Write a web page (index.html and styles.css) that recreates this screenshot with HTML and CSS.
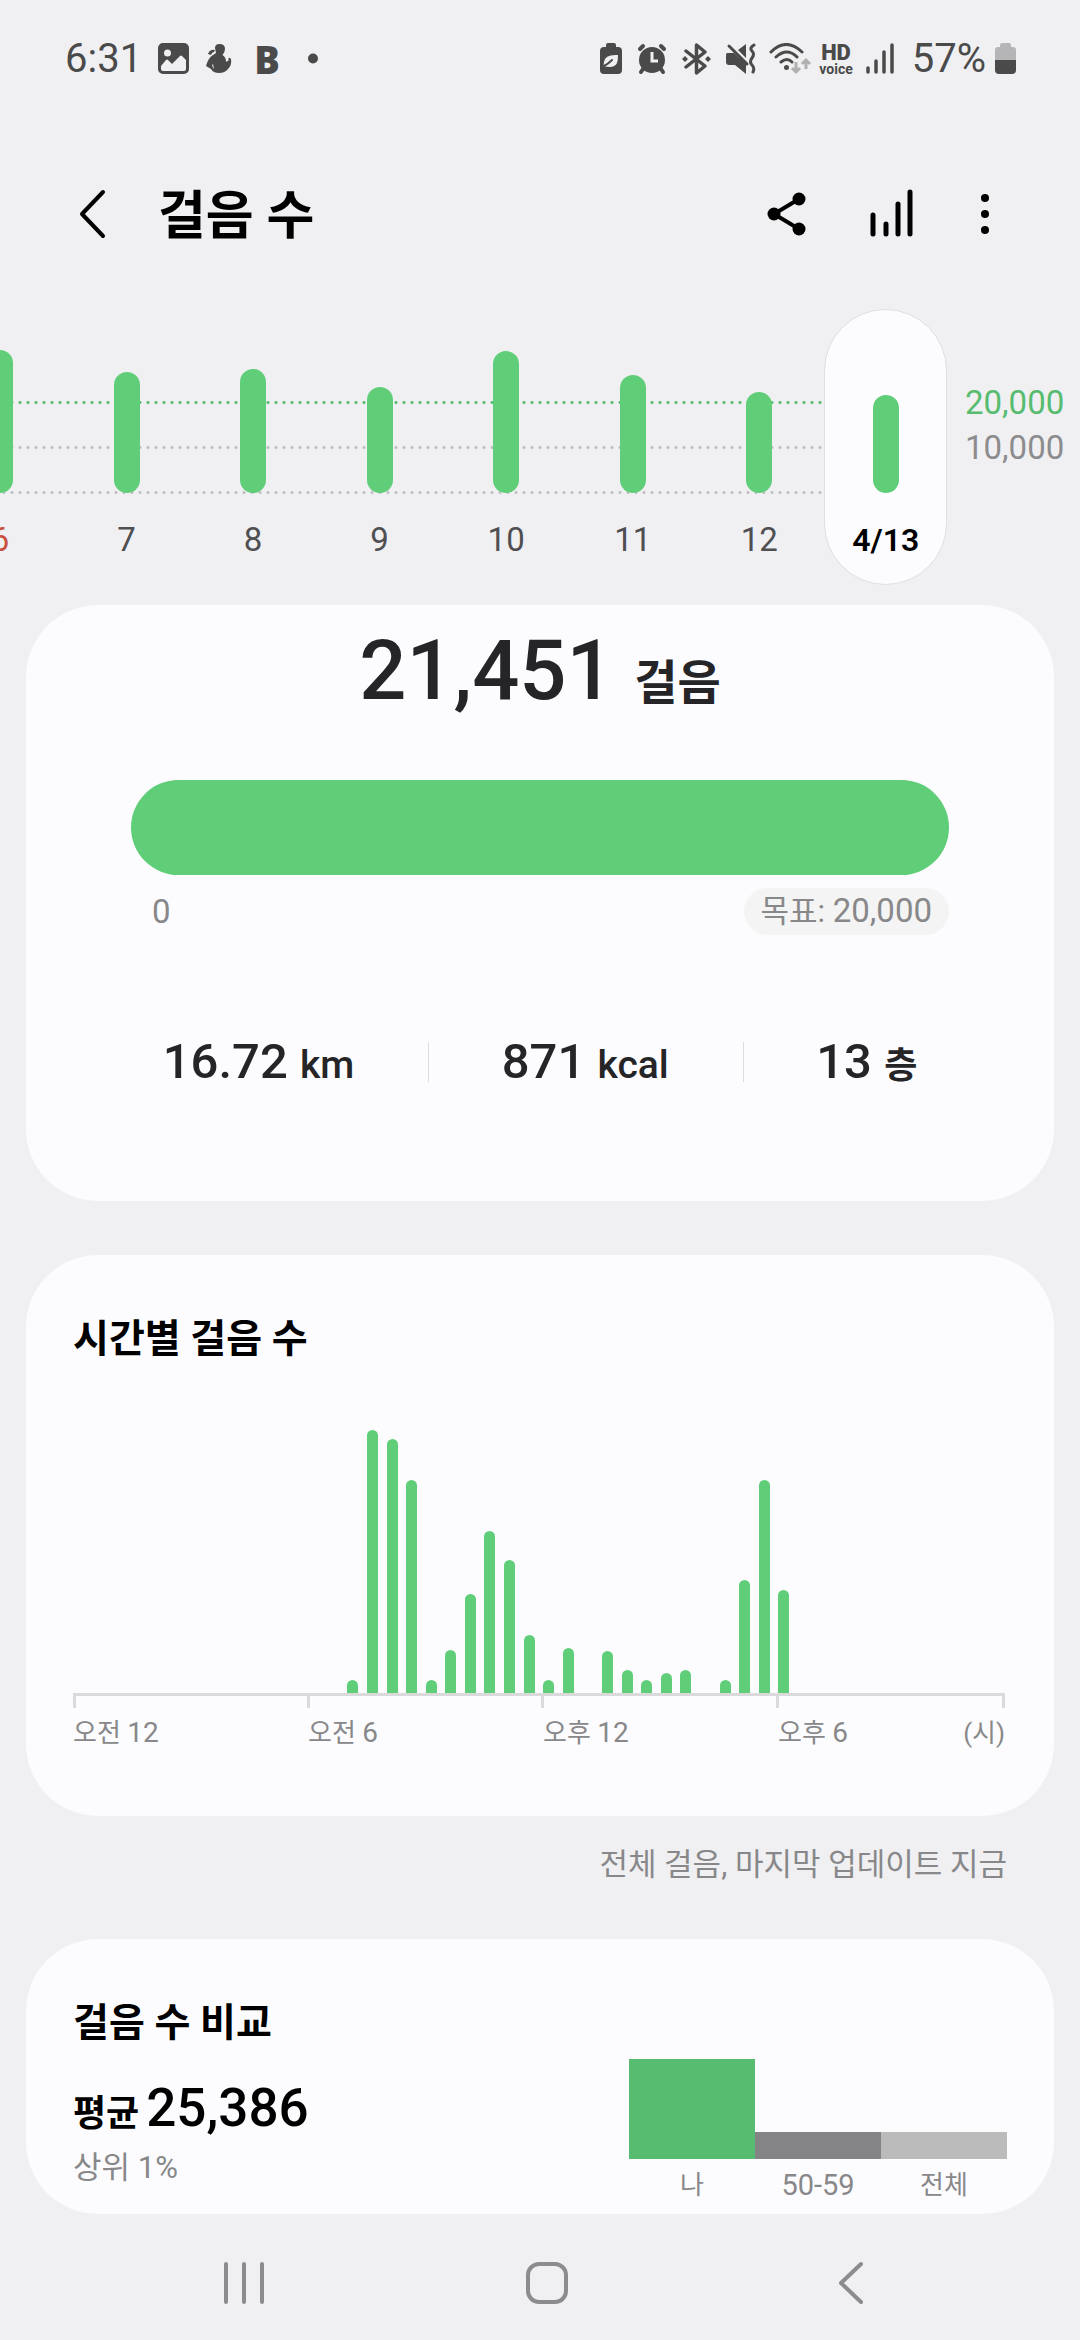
FILE: index.html
```html
<!DOCTYPE html>
<html lang="ko">
<head>
<meta charset="utf-8">
<meta name="viewport" content="width=device-width, initial-scale=1">
<title>걸음 수</title>
<link rel="stylesheet" href="styles.css">
</head>
<body>
<div class="status">
  <div class="status-left">
    <span class="status-text">6:31</span>
    <svg class="ic-image" width="32" height="32" viewBox="0 0 32 32"><path fill="#4a4a4a" fill-rule="evenodd" d="M5 0h21a5 5 0 0 1 5 5v21a5 5 0 0 1-5 5H5a5 5 0 0 1-5-5V5a5 5 0 0 1 5-5ZM9.500 6.500a3.500 3.500 0 1 0 0 7 3.500 3.500 0 0 0 0-7ZM3 23v3q0 2 2 2h21q2 0 2-2V17l-4-4q-1-1-2 0l-8 8-4-4q-1-.800-2 0Z"/></svg>
    <svg class="ic-figure" width="26" height="32" viewBox="0 0 26 32"><g fill="#4a4a4a"><path d="M9 5Q9 1 13.500 1Q19 1 19 6Q19 9 16.500 12Q20 14 20 18.500Q23 19 22.500 15.500Q23 14 25 16Q26 22 22 26Q19 30 13 30Q7 30 5 26L0 23Q2 15 7 12L10 10ZM7 21Q5 22 8 26Z" fill-rule="evenodd"/><path d="M2 11Q4 6 9 7L8 9Q6 9 5 12Z"/></g></svg>
    <span class="status-b">B</span>
    <svg class="ic-dot" width="10" height="32" viewBox="0 0 10 32"><circle cx="5" cy="15.500" r="5" fill="#4a4a4a"/></svg>
  </div>
  <div class="status-right">
    <svg width="22" height="32" viewBox="0 0 22 32"><path fill="#4a4a4a" fill-rule="evenodd" d="M8 0h6q2 0 2 2v2h2q4 0 4 4v19q0 4-4 4H4q-4 0-4-4V8q0-4 4-4h2V2q0-2 2-2ZM18 12Q5 11 4 19L3.500 23Q14 26 17 20Q18 17 18 12Z"/><path d="M4 23Q8 21 12 17" stroke="#4a4a4a" stroke-width="2" fill="none" stroke-linecap="round"/></svg>
    <svg width="30" height="32" viewBox="0 0 30 32"><g stroke="#4a4a4a" stroke-width="4" stroke-linecap="round" fill="none"><path d="M3 6l3-3M27 6l-3-3M6 26l-2 3M24 26l2 3"/></g><circle cx="15" cy="17" r="13" fill="#4a4a4a"/><path d="M15 9v9h6" fill="none" stroke="#f0f0f2" stroke-width="3"/></svg>
    <svg width="29" height="32" viewBox="0 0 29 32"><path d="M4 8L23 23L14.500 30V2L23 9L4 24" fill="none" stroke="#4a4a4a" stroke-width="3.500" stroke-linejoin="round" stroke-linecap="round"/><path d="M0 16l3-3 3 3-3 3ZM23 16l3-3 3 3-3 3Z" fill="#4a4a4a"/></svg>
    <svg width="31" height="32" viewBox="0 0 31 32"><path fill="#4a4a4a" d="M1 10h7l12 11v10L9 22H3q-3 0-3-3v-6q0-3 1-3ZM12 7l8-6v14Z"/><path d="M3 3l18 18" stroke="#4a4a4a" stroke-width="3" stroke-linecap="round"/><path d="M28 2q-5 3-2 6t0 7 0 7 1 7" fill="none" stroke="#4a4a4a" stroke-width="3" stroke-linecap="round"/></svg>
    <svg class="ic-wifi" width="42" height="32" viewBox="0 0 42 32"><g fill="none" stroke="#4a4a4a" stroke-width="3" stroke-linecap="round"><path d="M2 9Q17-6 33 9M7 14Q18 4 28 14M12 19Q18 14 23 19"/></g><circle cx="17.500" cy="24.500" r="2.500" fill="#4a4a4a"/><path d="M27 19v10m-4-4l4 4 4-4M37 26V17m-4 4l4-4 4 4" fill="none" stroke="#b0b0b0" stroke-width="3"/></svg>
    <span class="hd"><b>HD</b><span>voice</span></span>
    <svg class="ic-signal" width="28" height="32" viewBox="0 0 28 32"><path d="M2 25v4M10 18v11M18 9v20M26 2v27" stroke="#4a4a4a" stroke-width="3.500" stroke-linecap="round"/></svg>
    <span class="status-text">57%</span>
    <svg class="ic-batt" width="21" height="32" viewBox="0 0 21 32"><path fill="#b5b5b7" d="M7 0h7q2 0 2 2v2h2q3 0 3 3v10H0V7q0-3 3-3h2V2q0-2 2-2Z"/><path fill="#4a4a4a" d="M0 17h21v10q0 4-4 4H4q-4 0-4-4Z"/></svg>
  </div>
</div>

<header class="bar">
  <button class="icon-btn back" aria-label="뒤로"><svg width="28" height="52" viewBox="0 0 28 52"><path d="M25 4L4 26l21 22" fill="none" stroke="#000" stroke-width="4" stroke-linecap="round" stroke-linejoin="round"/></svg></button>
  <h1>걸음 수</h1>
  <button class="icon-btn" aria-label="공유"><svg width="40" height="50" viewBox="0 0 40 50"><path d="M32 10L7 25l25 15" fill="none" stroke="#000" stroke-width="4"/><g fill="#000"><circle cx="32" cy="10" r="6.500"/><circle cx="7" cy="25" r="6.500"/><circle cx="32" cy="40" r="6.500"/></g></svg></button>
  <button class="icon-btn chart" aria-label="통계"><svg width="44" height="50" viewBox="0 0 44 50"><path d="M3 26v19M16 35v10M28 15v30M40 3v42" stroke="#000" stroke-width="5" stroke-linecap="round"/></svg></button>
  <button class="icon-btn more" aria-label="더보기"><svg width="10" height="50" viewBox="0 0 10 50"><g fill="#000"><circle cx="5" cy="9" r="4"/><circle cx="5" cy="25" r="4"/><circle cx="5" cy="41" r="4"/></g></svg></button>
</header>

<main>
  <section class="week" aria-label="일별 걸음 수">
    <div class="days">
      <button class="day sunday"><span class="day-bar" style="height:143px"></span><span class="day-name">6</span></button>
      <button class="day"><span class="day-bar" style="height:121px"></span><span class="day-name">7</span></button>
      <button class="day"><span class="day-bar" style="height:124px"></span><span class="day-name">8</span></button>
      <button class="day"><span class="day-bar" style="height:106px"></span><span class="day-name">9</span></button>
      <button class="day"><span class="day-bar" style="height:142px"></span><span class="day-name">10</span></button>
      <button class="day"><span class="day-bar" style="height:118px"></span><span class="day-name">11</span></button>
      <button class="day"><span class="day-bar" style="height:101px"></span><span class="day-name">12</span></button>
      <button class="day selected" aria-current="date"><span class="day-bar" style="height:98px"></span><span class="day-name">4/13</span></button>
    </div>
    <div class="scale"><span class="goal">20,000</span><span>10,000</span></div>
  </section>

  <section class="card today">
    <p class="total">21,451 <span>걸음</span></p>
    <div class="progress" role="progressbar" aria-label="걸음 수" aria-valuemin="0" aria-valuemax="20000" aria-valuenow="20000"></div>
    <div class="range"><span>0</span><span class="target">목표: <span class="num">20,000</span></span></div>
    <ul class="stats">
      <li>16.72 <small>km</small></li>
      <li>871 <small>kcal</small></li>
      <li>13 <small class="ko">층</small></li>
    </ul>
  </section>

  <section class="card hourly">
    <h2>시간별 걸음 수</h2>
    <div class="bars">
      <i></i><i></i><i></i><i></i><i></i><i></i><i></i><i></i><i></i><i></i><i></i><i></i><i></i><i></i>
      <i style="height:13px"></i><i style="height:263px"></i><i style="height:254px"></i><i style="height:213px"></i>
      <i style="height:13px"></i><i style="height:43px"></i><i style="height:99px"></i><i style="height:162px"></i>
      <i style="height:133px"></i><i style="height:58px"></i><i style="height:13px"></i><i style="height:45px"></i>
      <i></i><i style="height:42px"></i><i style="height:23px"></i><i style="height:13px"></i>
      <i style="height:20px"></i><i style="height:23px"></i><i></i><i style="height:13px"></i>
      <i style="height:113px"></i><i style="height:213px"></i><i style="height:103px"></i>
      <i></i><i></i><i></i><i></i><i></i><i></i><i></i><i></i><i></i><i></i><i></i>
    </div>
    <div class="ticks"><span></span><span></span><span></span><span></span></div>
    <div class="hours"><span>오전 <b>12</b></span><span>오전 <b>6</b></span><span>오후 <b>12</b></span><span>오후 <b>6</b></span><span class="unit">(시)</span></div>
  </section>
  <p class="note">전체 걸음, 마지막 업데이트 지금</p>

  <section class="card compare">
    <div class="summary">
      <h2>걸음 수 비교</h2>
      <p class="average"><span>평균</span>25,386</p>
      <p class="rank">상위 1%</p>
    </div>
    <div class="groups">
      <div class="group me"><i style="height:100px"></i><span>나</span></div>
      <div class="group peers"><i style="height:27px"></i><span class="num">50-59</span></div>
      <div class="group all"><i style="height:27px"></i><span>전체</span></div>
    </div>
  </section>
</main>

<nav class="system-nav" aria-label="시스템">
  <button class="icon-btn" aria-label="최근 앱"><svg width="48" height="48" viewBox="0 0 48 48"><path d="M6 5v38M24 5v38M42 5v38" stroke="#8c8c8e" stroke-width="4" stroke-linecap="round"/></svg></button>
  <button class="icon-btn" aria-label="홈"><svg width="48" height="48" viewBox="0 0 48 48"><rect x="5" y="5" width="38" height="38" rx="11" fill="none" stroke="#8c8c8e" stroke-width="4"/></svg></button>
  <button class="icon-btn" aria-label="이전"><svg width="48" height="48" viewBox="0 0 48 48"><path d="M35 5L15 24l20 19" fill="none" stroke="#8c8c8e" stroke-width="4" stroke-linecap="round" stroke-linejoin="round"/></svg></button>
</nav>
</body>
</html>
```
FILE: styles.css
```css
* { box-sizing: border-box; }

body {
  margin: 0;
  min-height: 100vh;
  display: flex;
  flex-direction: column;
  background: #f0f0f2;
  color: #252528;
  font-family: Roboto, "Noto Sans CJK KR", sans-serif;
  font-size: 31px;
  line-height: 40px;
}

h1, h2, p, ul { margin: 0; padding: 0; }
ul { list-style: none; }
svg { display: block; }
main { flex: 1; }

button {
  padding: 0;
  border: 0;
  background: none;
  color: inherit;
  font: inherit;
}

/* Status bar */
.status {
  display: flex;
  justify-content: space-between;
  align-items: center;
  height: 118px;
  padding: 0 64px 0 65px;
  color: #4a4a4a;
}
.status-left, .status-right { display: flex; align-items: center; }
.status-left { gap: 16px; }
.status-right { gap: 15px; }
.status-text { font-size: 40px; }
.status-b { margin-left: 6px; font-family: "Open Sans", sans-serif; font-size: 38px; font-weight: 800; }
.ic-dot { margin-left: 12px; }
.ic-wifi { margin-left: -3px; }
.hd {
  display: flex;
  flex-direction: column;
  align-items: center;
  margin-left: -7px;
  font-size: 14px;
  line-height: 14px;
  font-weight: 700;
}
.hd b { font-size: 22px; line-height: 19px; }
.ic-signal { margin: 0 3px 0 -2px; }
.ic-batt { margin-left: -12px; }
.status-right .status-text { margin-right: 6px; }

/* Title bar */
.bar {
  display: flex;
  align-items: center;
  height: 191px;
  padding: 0 90px 0 78px;
  color: #000;
}
.bar h1 { flex: 1; margin-left: 52px; padding-top: 6px; font-size: 52px; line-height: 64px; font-weight: 700; }
.chart { margin-left: 63px; }
.more { margin-left: 66px; }

/* Daily strip */
.week { display: flex; height: 276px; margin-bottom: 20px; }
.days {
  position: relative;
  flex: 1;
  display: flex;
  justify-content: flex-end;
  overflow: hidden;
}
.days::before {
  content: "";
  position: absolute;
  top: 92px;
  left: 0;
  right: 127px;
  height: 93px;
  background:
    radial-gradient(circle, #57bc6f 1px, transparent 2px) 0 0 / 8px 3px repeat-x,
    radial-gradient(circle, #c0c0c2 1px, transparent 2px) 0 45px / 8px 3px repeat-x,
    radial-gradient(circle, #c0c0c2 1px, transparent 2px) 0 90px / 8px 3px repeat-x;
}
.day {
  position: relative;
  flex: 0 0 calc(100% / 7.5);
  display: flex;
  flex-direction: column;
  align-items: center;
  justify-content: flex-end;
  padding-bottom: 24px;
  border: 1px solid transparent;
  color: #4f4f52;
  font-size: 33px;
}
.day-bar { width: 26px; border-radius: 13px; background: #60ce79; }
.day-name { margin-top: 27px; }
.sunday { color: #c8503f; }
.selected {
  flex-basis: calc(100% / 7.5 - 4px);
  margin: 0 2px;
  border-color: #e0e0e2;
  border-radius: 64px;
  background: #fcfcfe;
  background-clip: padding-box;
  color: #000;
  font-size: 32px;
  font-weight: 600;
}
.scale {
  flex: 0 0 131px;
  display: flex;
  flex-direction: column;
  gap: 5px;
  padding: 74px 0 0 16px;
  color: #8c8c8e;
  font-size: 33px;
}
.goal { color: #57bc6f; }

/* Cards */
.card { margin: 0 26px; border-radius: 72px; background: #fcfcfe; }
.card h2 { padding-top: 2px; color: #000; font-size: 39px; line-height: 54px; font-weight: 600; }

.today { padding: 18px 63px 109px; }
.total { height: 96px; text-align: center; font-size: 83px; line-height: 96px; font-weight: 500; }
.total span { font-size: 47px; line-height: 1; font-weight: 600; }
.progress { height: 95px; margin: 61px 42px 0; border-radius: 48px; background: #60ce79; }
.range {
  display: flex;
  justify-content: space-between;
  margin: 13px 42px 0 63px;
  color: #88888a;
  font-size: 33px;
  line-height: 47px;
}
.target { padding: 0 17px; border-radius: 24px; background: #f4f4f4; font-size: 31px; }
.target .num { font-size: 33px; line-height: 1; }
.stats { display: flex; margin-top: 97px; font-size: 49px; line-height: 60px; font-weight: 500; }
.stats li { position: relative; flex: 1 1 auto; text-align: center; }
.stats li + li::before {
  content: "";
  position: absolute;
  left: 0;
  top: 10px;
  width: 1px;
  height: 40px;
  background: #dcdcde;
}
.stats small { font-size: 39px; line-height: 1; }
.stats .ko { font-size: 36px; font-weight: 600; }

.hourly { margin-top: 54px; padding: 55px 49px 65px 47px; }
.bars { display: flex; justify-content: space-between; align-items: flex-end; height: 263px; margin-top: 64px; }
.bars i { width: 11px; border-radius: 6px 6px 0 0; background: #60ce79; }
.ticks, .hours { display: grid; grid-template-columns: repeat(3, 235fr) 227fr; }
.ticks { height: 15px; border-top: 3px solid #dadadc; border-right: 3px solid #dadadc; }
.ticks span { border-left: 3px solid #dadadc; }
.hours { position: relative; margin-top: 7px; color: #88888a; font-size: 26px; line-height: 36px; }
.hours b { font-size: 28px; line-height: 1; font-weight: 400; }
.unit { position: absolute; right: 0; }
.note { margin: 29px 73px 54px; text-align: right; color: #88888a; }

.compare { display: flex; justify-content: space-between; padding: 55px 47px 9px; }
.summary { padding-bottom: 17px; }
.average { margin-top: 28px; color: #000; font-size: 53px; line-height: 60px; font-weight: 500; }
.average span { margin-right: 7px; font-size: 36px; line-height: 1; font-weight: 600; }
.rank { margin-top: 10px; color: #88888a; }
.groups { display: flex; align-items: flex-end; flex: 0 0 378px; }
.group { flex: 1; display: flex; flex-direction: column; gap: 6px; text-align: center; color: #88888a; font-size: 26px; }
.group .num { font-size: 29px; }
.me i { background: #57bc6f; }
.peers i { background: #848486; }
.all i { background: #bbb; }

/* System navigation */
.system-nav { display: flex; justify-content: space-between; align-items: center; height: 122px; padding: 8px 206px 0 220px; }
```
